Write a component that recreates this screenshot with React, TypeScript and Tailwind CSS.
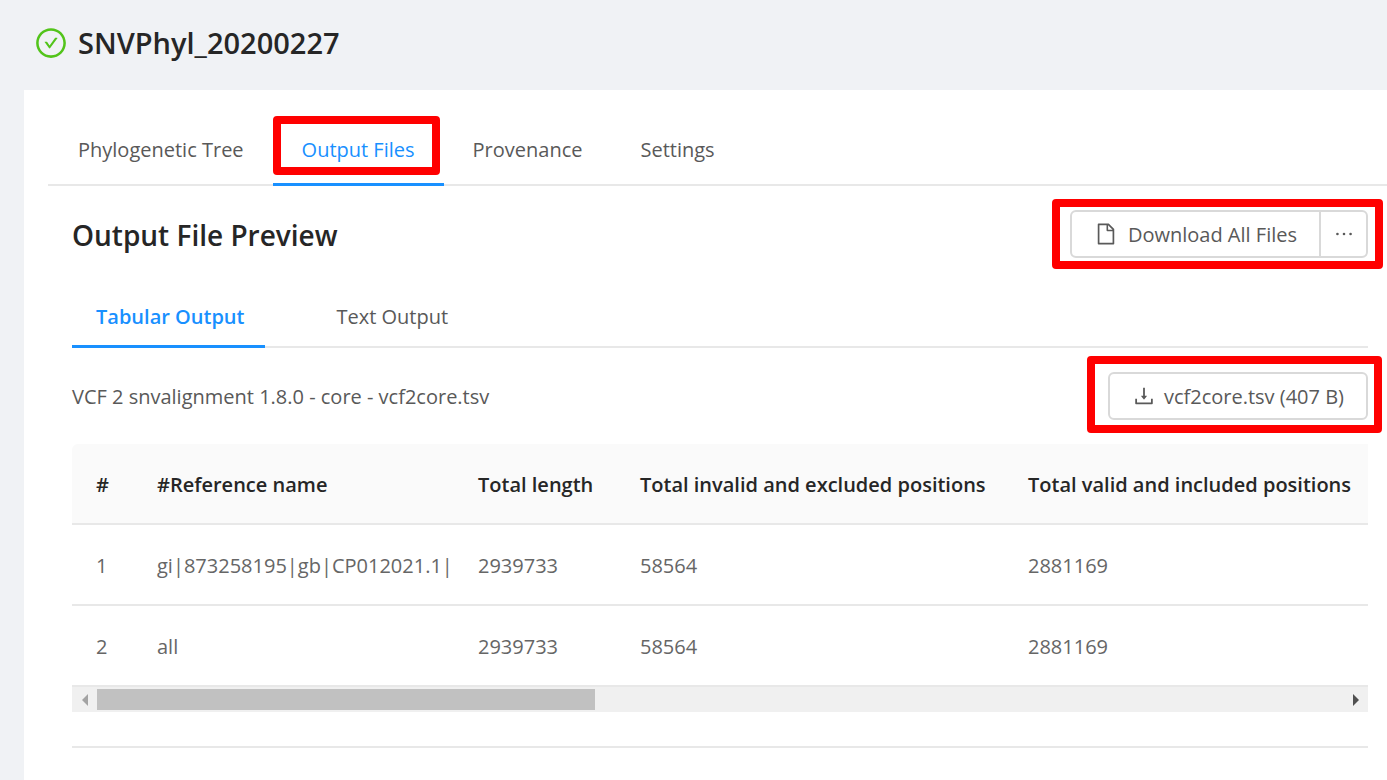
import React, { useState } from "react";
import {
  AiOutlineCheckCircle,
  AiOutlineDownload,
  AiOutlineEllipsis,
  AiOutlineFile,
} from "react-icons/ai";

const mainTabs = ["Phylogenetic Tree", "Output Files", "Provenance", "Settings"];
const outputTabs = ["Tabular Output", "Text Output"];

const columns = [
  { title: "#", width: "w-[61px]" },
  { title: "#Reference name", width: "w-[321px]" },
  { title: "Total length", width: "w-[162px]" },
  { title: "Total invalid and excluded positions", width: "w-[388px]" },
  { title: "Total valid and included positions", width: "" },
];

const rows = [
  ["1", "gi|873258195|gb|CP012021.1|", "2939733", "58564", "2881169"],
  ["2", "all", "2939733", "58564", "2881169"],
];

function Highlight({ className }: { className: string }) {
  return (
    <span
      aria-hidden="true"
      className={`pointer-events-none absolute rounded-sm border-8 border-[#ff0000] ${className}`}
    />
  );
}

function MainTabs() {
  const [active, setActive] = useState("Output Files");
  return (
    <nav role="tablist" className="flex border-b-2 border-[#e8e8e8] pl-px">
      {mainTabs.map((tab) => (
        <button
          key={tab}
          type="button"
          role="tab"
          aria-selected={tab === active}
          onClick={() => setActive(tab)}
          className={`relative -mb-0.5 h-18 border-b-3 px-[29px] pt-0.5 ${
            tab === active ? "border-[#1890ff] text-[#1890ff]" : "border-transparent"
          }`}
        >
          {tab}
          {tab === "Output Files" && <Highlight className="top-0.5 right-1 bottom-2 left-0" />}
        </button>
      ))}
    </nav>
  );
}

function OutputTabs() {
  const [active, setActive] = useState("Tabular Output");
  return (
    <nav role="tablist" className="mt-7 flex gap-12 border-b-2 border-[#e8e8e8]">
      {outputTabs.map((tab) => (
        <button
          key={tab}
          type="button"
          role="tab"
          aria-selected={tab === active}
          onClick={() => setActive(tab)}
          className={`-mb-0.5 h-[62px] border-b-3 pt-0.5 pr-5 pl-6 ${
            tab === active
              ? "border-[#1890ff] font-semibold text-[#1890ff]"
              : "border-transparent"
          }`}
        >
          {tab}
        </button>
      ))}
    </nav>
  );
}

function ScrollBar() {
  return (
    <div className="flex h-[25px] items-center bg-[#f0f0f0]">
      <button type="button" aria-label="Scroll left" className="flex h-full w-[25px] items-center justify-center">
        <svg viewBox="0 0 6 12" className="h-3 w-1.5 fill-[#a3a3a3]">
          <path d="M6 0v12L0 6z" />
        </svg>
      </button>
      <div className="h-full flex-1 py-0.5">
        <div className="h-full w-2/5 bg-[#c1c1c1]" />
      </div>
      <button type="button" aria-label="Scroll right" className="flex h-full w-[25px] items-center justify-center">
        <svg viewBox="0 0 6 12" className="h-3 w-1.5 fill-[#505050]">
          <path d="M0 0v12l6-6z" />
        </svg>
      </button>
    </div>
  );
}

export default function App() {
  return (
    <div className="flex min-h-screen flex-col bg-[#f0f2f5] pl-6 font-['Open_Sans','Noto_Sans',sans-serif] text-[20px] leading-8 text-[#595959]">
      <header className="flex h-[90px] items-center gap-2.5 pb-1 pl-2.5">
        <AiOutlineCheckCircle className="size-[34px] text-[#52c41a]" />
        <h1 className="text-[29px] leading-9 font-semibold text-[#262626]">SNVPhyl_20200227</h1>
      </header>

      <main className="flex-1 bg-white pt-6 pb-8 pl-6">
        <MainTabs />

        <section className="mt-6 pr-[19px] pl-6">
          <div className="flex items-center justify-between">
            <h2 className="pt-0.5 text-[28px] leading-9 font-semibold text-[#262626]">Output File Preview</h2>
            <div className="relative flex h-12">
              <button
                type="button"
                className="flex items-center gap-2.5 rounded-l-md border-2 border-[#d9d9d9] px-[22px]"
              >
                <AiOutlineFile className="size-6" />
                <span className="pt-0.5">Download All Files</span>
              </button>
              <button
                type="button"
                aria-label="More downloads"
                className="-ml-0.5 flex w-[49px] items-center justify-center rounded-r-md border-2 border-[#d9d9d9]"
              >
                <AiOutlineEllipsis className="size-6" />
              </button>
              <Highlight className="-top-[11px] -right-[15px] -bottom-[11px] -left-[18px]" />
            </div>
          </div>

          <OutputTabs />

          <div className="mt-6 flex items-center justify-between">
            <p className="pt-0.5">VCF 2 snvalignment 1.8.0 - core - vcf2core.tsv</p>
            <div className="relative flex h-12">
              <button
                type="button"
                className="flex items-center gap-2 rounded-md border-2 border-[#d9d9d9] px-[22px]"
              >
                <AiOutlineDownload className="size-6" />
                <span className="pt-0.5">vcf2core.tsv (407 B)</span>
              </button>
              <Highlight className="-top-4 -right-[14px] -bottom-[13px] -left-[21px]" />
            </div>
          </div>

          <div className="mt-6 overflow-hidden rounded-tl-md">
            <table className="w-full table-fixed border-separate border-spacing-0 text-left whitespace-nowrap">
              <thead className="bg-[#fafafa] text-[#262626]">
                <tr>
                  {columns.map((column) => (
                    <th
                      key={column.title}
                      scope="col"
                      className={`h-[81px] border-b-2 border-[#e8e8e8] pt-0.5 pl-6 font-semibold ${column.width}`}
                    >
                      {column.title}
                    </th>
                  ))}
                </tr>
              </thead>
              <tbody className="text-[#666666]">
                {rows.map((row) => (
                  <tr key={row[0]}>
                    {row.map((cell, i) => (
                      <td key={i} className="h-[81px] border-b-2 border-[#e8e8e8] pt-0.5 pl-6">
                        {cell}
                      </td>
                    ))}
                  </tr>
                ))}
              </tbody>
            </table>
            <ScrollBar />
          </div>

          <hr className="mt-[34px] border-t-2 border-[#e8e8e8]" />
        </section>
      </main>
    </div>
  );
}
